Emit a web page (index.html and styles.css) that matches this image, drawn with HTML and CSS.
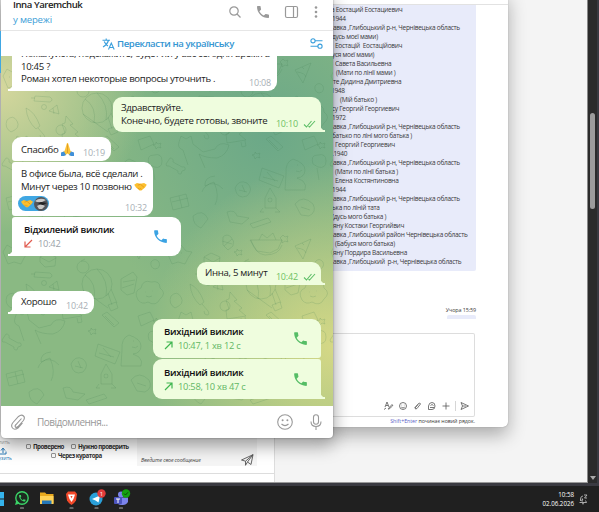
FILE: index.html
```
<!DOCTYPE html>
<html lang="uk">
<head>
<meta charset="utf-8">
<title>Inna Yaremchuk</title>
<link rel="stylesheet" href="styles.css">
</head>
<body>
<svg width="0" height="0" class="defs">
<defs>
<symbol id="phone" viewBox="0 0 24 24"><path d="M6.6 10.8c1.4 2.8 3.8 5.1 6.6 6.6l2.2-2.2c.3-.3.7-.4 1-.2 1.1.4 2.3.6 3.6.6.6 0 1 .4 1 1V20c0 .6-.4 1-1 1C10.600 21 3 13.400 3 4c0-.6.5-1 1-1h3.500c.6 0 1 .4 1 1 0 1.200.2 2.400.6 3.600.1.3 0 .7-.2 1z"/></symbol>
<symbol id="ticks" viewBox="0 0 13 8"><path d="M1 4.500 3.500 7 8.500 1M5.500 6.200 6.500 7 12 1" fill="none" stroke="#5fbf68" stroke-width="1.100"/></symbol>
<symbol id="out" viewBox="0 0 9 9"><path d="M1 8 8 1M2.500 1H8V6.500" fill="none" stroke="#3fb64f" stroke-width="1.200"/></symbol>
<symbol id="shake" viewBox="0 0 14 10"><path d="M0 3 3 1 7 2 11 1 14 3 12 6 8 9.500 6 9.500 2 6Z" fill="#fcbf2f"/><path d="M4 3.500 7 2.500 11 6M6 8.500 4 6.500M8 8.500 6 6.500" fill="none" stroke="#d98a12" stroke-width=".7"/></symbol>
<pattern id="doodles" width="164" height="176" patternUnits="userSpaceOnUse">
<g fill="none" stroke="#3f7d50" stroke-opacity=".2" stroke-width=".9" stroke-linejoin="round">
<circle cx="96" cy="52" r="15"/><path d="M84 43q12 8 9 24M96 37q12 12 9 27M82 58 107 76M107 61l4 12M110 57l6 14M107 73l8-3 2 6-7 3z"/>
<path d="M65 60l7 8-3 1 8 7-3 2 7 6-19 3-1-9 3-1-3-9 3-1zM76 86l1 5 4-1-1-5"/>
<path d="M25 52q9 4 14 18l-4 3q-9-8-10-21zM37 72l6 7q2 4-1 4-3 0-3-4"/>
<path d="M14 86l2-6 5 3 5-3 2 8 10 8 12-3q4-8 14-4-2 10-12 13-12 0-18-4l6 14M14 86q-2 6 4 8l5 15"/>
<path d="M137 68q-5-9 3-12 2-9 10-6 9-2 9 6 7 5 0 11-4 8-12 3-6 3-10-2zM144 60h.5M151 59h.5M145 64q3 2 6 0"/>
<path d="M120 47l12-7 4 5-3 16-7 2-6-5zM122 50l12-2M121 56l12-4"/>
<path d="M128 103q-8 3-7 15l-1 16h20q2-5-2-9l-6-3q8-1 8-8t-12-11zM132 109h1M131 115q4 2 6-1"/>
<path d="M97 112l22 8-5 12-20-8zM102 116l8 9M98 121l15 4"/>
<path d="M58 5q4-4 8 0t2 9l-5 4-5-5zM57 9l10 3M59 14l8-7"/>
<path d="M86 8q4 14 14 15 14 0 17-10M85 8h32l-4 9-8 4-13-2zM94 8l3-6 5 4 6-5 3 7"/>
<path d="M130 14l16-7-8 20zM132 16q8 1 9 5M137 11l2 2"/>
<path d="M39 25l7-4 9 4-1 9-10 1-5-5zM39 25l9 5 7-4"/>
<path d="M2 20l4-7 5 3 5-3 5 6 6 1-4 6-3 6-7-2-6 2zM8 21h1M16 21h1"/>
<circle cx="82" cy="35" r="6"/><path d="M80 29l4-2"/>
<path d="M34 40l15 1q4 3 0 5l-16-1zM30 42h4"/>
<path d="M48 55l8-6 2 9zM52 52l1 6"/><circle cx="60" cy="74" r="5"/><circle cx="43" cy="51" r="2.500"/>
<path d="M101 83l5-3 12 11-5 4zM104 84l9 9"/>
<path d="M3 105l2-3q4 0 3 4l9 5q4-1 3 3l-3 1-1 3q-4 0-3-3l-9-5q-3 1-3-2z"/>
<path d="M70 132q4-9 12-5 7 6 0 13-10 4-12-8zM74 134l8 2M77 129l3 7"/>
<path d="M5 142l16-4 3 12-16 4zM7 146l16-4M14 140l3 12"/>
<path d="M40 130q10-6 18 3M40 130q-1-9 10-10M49 126q6 14 1 23M49 126q-10 3-12 10"/>
<path d="M100 142l5-10 6 10v10h-11zM98 152l-3 4h4M111 152l4 4h-5"/><circle cx="105" cy="144" r="2"/>
<path d="M130 148q8-10 18 0 4 8-4 12l-8-1zM136 151l9 3"/>
<path d="M62 156q8-3 10 4l12 2-7 6-12-2zM28 160q10-8 15 3l-7 9q-8-3-8-12zM85 168l18-6 3 4-18 6z"/>
<path d="M118 3l2 2 3-1-1 3 1 3-3-1-3 2v-3l-2-2zM72 17l2 2 3-1-1 3 1 2-3-1-2 2-1-3-2-1 3-1zM155 86l2 2 3-1-1 3 1 2-3-1-2 2-1-3-2-1 3-1zM90 96l2 2 3-1-1 3 1 2-3-1-2 2-1-3-2-1 3-1z"/>
<path d="M150 30q4-5 8 0 2 6-4 7-5-1-4-7zM137 84l12-4 4 8-13 6zM6 64q6-6 10 1t-6 11q-7-4-4-12zM148 108q-3-9 5-9 8-2 8 6 0 8-8 6zM152 112l2 12"/>
</g>
</pattern>
</defs>
</svg>

<div class="desktop">
<div class="page">
<div class="side">
<div class="upload"><span>Удалить</span><svg width="9" height="8" viewBox="0 0 9 8"><path d="M5 6V2M3 3.500 5 1 7 3.500M1 4.500V7H8V4.500" fill="none" stroke="#2a7ab8"/></svg><b>Загрузить</b></div>
<div class="checks">
<div><i></i>Проверено <i class="second"></i>Нужно проверить</div>
<div class="row2"><i></i>Через куратора</div>
</div>
<div class="answer"><span>Введите свое сообщение</span>
<svg width="13" height="12" viewBox="0 0 13 12"><path d="M.5 6 12 .7 10 10.500 6.500 8 12 .7 4.500 7.200ZM4.500 7.200V11.300L6.500 8" fill="none" stroke="#555" stroke-width=".9"/></svg>
</div>
</div>
</div>
<div class="scroll"><div class="thumb"></div><div class="down"></div></div>
</div>

<div class="teams">
<div class="teams-top"></div>
<div class="quote">
<p class="a0">а Еостаций Еостациевич</p>
<p>1944</p>
<p class="a2">авка ,Глибоцький р-н, Чернівецька область</p>
<p>дусь моєї мами)</p>
<p class="a3">Еостацій&nbsp; Еостаційович</p>
<p>уся моєї мами)</p>
<p class="a3">Савета Васильевна</p>
<p class="a5">(Мати по лінії мами )</p>
<p class="a2">те Дидина Дмитриевна</p>
<p class="a0">1948</p>
<p class="a9">(Мій батько )</p>
<p>су Георгий Георгиевич</p>
<p>1972</p>
<p class="a2">авка ,Глибоцький р-н, Чернівецька область</p>
<p>батько по ліні мого батька )</p>
<p class="a3">Георгий Георгиевич</p>
<p>.1940</p>
<p class="a2">авка ,Глибоцький р-н, Чернівецька область</p>
<p class="a4">(Мати по лінії батька )</p>
<p class="a3">Елена Костянтиновна</p>
<p>1944</p>
<p class="a2">авка ,Глибоцький р-н, Чернівецька область</p>
<p>ька по ліній тата</p>
<p>(дусь мого батька )</p>
<p class="a2">яну Костаки Георгийвич</p>
<p class="a2">авка ,Глибоцький район Чернівецька область</p>
<p class="a4">(Бабуся мого батька)</p>
<p class="a2">яну Пордира Васильевна</p>
<p class="a2">авка ,Глибоцький&nbsp; р-н, Чернівецька область</p>
</div>
<div class="when">Учора 15:59</div>
<div class="stub"></div>
<div class="compose">
<svg width="100" height="12" viewBox="0 0 100 12" fill="none" stroke="#555" stroke-width=".8">
<path d="M2 7 4 2 6 7M3 5.500H5M5 9 9 4.500Q10 5 9.500 6L5.500 9.500M1 9.500 3 8"/>
<circle cx="20" cy="6" r="3.500"/><path d="M18.300 7.200Q20 8.800 21.700 7.200M18.700 4.800V5.300M21.300 4.800V5.300"/>
<path d="M32 8 35.500 3.500Q37 2.300 37.500 4L34 8.500Q32 10 32 7.500L35 4.500"/>
<path d="M45.500 9.500V6Q46 2.500 49 2.500T52 6 49 9.500ZM47 7.500H51M47.500 5.500Q49 3.500 50.500 5.500"/>
<path d="M59.500 6H66.500M63 2.500V9.500"/><path d="M72.500 1V11" stroke="#ccc"/>
<path d="M78 2.500 85.500 6 78 9.500 79.500 6ZM79.500 6H83"/>
</svg>
</div>
<div class="hint"><span>Shift+Enter</span> починає новий рядок.</div>
</div>

<div class="tg">
<div class="head">
<div class="who"><b>Inna Yaremchuk</b><span>у мережі</span></div>
<svg class="tools" width="96" height="16" viewBox="0 0 96 16">
<g fill="none" stroke="#999" stroke-width="1.200"><circle cx="9" cy="7" r="4.200"/><path d="M12 10 15.500 13.500"/><rect x="60.500" y="2.500" width="12" height="11" rx="1.500"/><path d="M68.500 2.500V13.500"/></g>
<use href="#phone" x="30" y="0" width="16" height="16" fill="#999"/>
<g fill="#999"><circle cx="91" cy="3.500" r="1.300"/><circle cx="91" cy="8" r="1.300"/><circle cx="91" cy="12.500" r="1.300"/></g>
</svg>
</div>
<div class="translate">
<svg width="13" height="12" viewBox="0 0 13 12" fill="none" stroke="#3a9fdc" stroke-width="1.100"><path d="M.5 2.200H8M4.200.5V2.200M6.500 2.500Q5 7 1 9M2.200 3.500Q3.500 6.500 6 8M6.500 11.500 9.300 5 12.200 11.500M7.500 9.500H11.200"/></svg>
<b>Перекласти на українську</b>
<svg class="tune" width="13" height="11" viewBox="0 0 13 11" fill="none" stroke="#3a9fdc" stroke-width="1.100"><circle cx="3" cy="2.800" r="2.100"/><path d="M5 2.800H12.500M.5 8.200H8"/><circle cx="10" cy="8.200" r="2.100"/></svg>
</div>
<div class="chat">
<svg class="wall" width="332" height="351"><rect width="332" height="351" fill="url(#doodles)"/></svg>
<div class="msg in tail m1">Пожалуйста, подскажите, будет ли у вас сегодня время в<br>10:45 ?<br>Роман хотел некоторые вопросы уточнить .<time>10:08</time></div>
<div class="msg out tail m2">Здравствуйте.<br>Конечно, будете готовы, звоните<time>10:10 <svg width="13" height="8"><use href="#ticks"/></svg></time></div>
<div class="msg in m3">Спасибо <svg class="pray" width="13" height="13" viewBox="0 0 13 13"><path d="M6 0 7 0 9.500 8 12.500 10 9 12.500 6.500 10.500 4 12.500.5 10 3.500 8Z" fill="#fcc43a"/><path d="M6.500 1V10" stroke="#d9901a" stroke-width=".7"/><path d="M0 9.500 3 8.500 5 12 3 13H0ZM13 9.500 10 8.500 8 12 10 13H13Z" fill="#4090d9"/></svg><time>10:19</time></div>
<div class="msg in m4">В офисе была, всё сделали .<br>Минут через 10 позвоню <svg width="13" height="9"><use href="#shake"/></svg>
<div class="react"><svg width="12" height="9"><use href="#shake"/></svg><svg width="14" height="14" viewBox="0 0 14 14"><circle cx="7" cy="7" r="7" fill="#55565a"/><path d="M1 4Q6 0 12 3L8 5 3 5ZM3 9 7 7 11 9 8 12 5 12Z" fill="#c9c8c6"/><path d="M7 5 13 6 9 8 4 7Z" fill="#222"/></svg></div>
<time>10:32</time></div>
<div class="msg in tail call m5"><div><b>Відхилений виклик</b><span><svg width="9" height="9" viewBox="0 0 9 9"><path d="M8 1 1.500 7.500M1 2.500V8H6.500" fill="none" stroke="#e05a4e" stroke-width="1.200"/></svg>10:42</span></div><svg width="17" height="17" fill="#3ba3e3"><use href="#phone"/></svg></div>
<div class="msg out tail m6">Инна, 5 минут<time>10:42 <svg width="13" height="8"><use href="#ticks"/></svg></time></div>
<div class="msg in tail m7">Хорошо<time>10:42</time></div>
<div class="msg out call m8"><div><b>Вихідний виклик</b><span><svg width="9" height="9"><use href="#out"/></svg>10:47, 1 хв 12 с</span></div><svg width="17" height="17" fill="#56bd66"><use href="#phone"/></svg></div>
<div class="msg out tail call m9"><div><b>Вихідний виклик</b><span><svg width="9" height="9"><use href="#out"/></svg>10:58, 10 хв 47 с</span></div><svg width="17" height="17" fill="#56bd66"><use href="#phone"/></svg></div>
</div>
<div class="input">
<svg width="16" height="18" viewBox="0 0 16 18"><path d="M11.500 5.500 6 11.500Q4.500 13 5.500 14T8 13.500L13 8Q15.500 5 13.500 3T8.500 3.500L3 9.500Q.5 12.500 2.500 15T8 15L12.500 10" fill="none" stroke="#999" stroke-width="1.100"/></svg>
<span>Повідомлення...</span>
<svg class="smile" width="16" height="16" viewBox="0 0 16 16" fill="none" stroke="#999" stroke-width="1.100"><circle cx="8" cy="8" r="7.300"/><path d="M4.500 10Q8 13.300 11.500 10"/><g fill="#999" stroke="none"><circle cx="5.600" cy="6.200" r="1"/><circle cx="10.400" cy="6.200" r="1"/></g></svg>
<svg width="12" height="16" viewBox="0 0 12 16" fill="none" stroke="#999" stroke-width="1.100"><rect x="3.500" y=".7" width="5" height="9.500" rx="2.500"/><path d="M1 7.500Q1 12.500 6 12.500T11 7.500M6 12.500V16"/></svg>
</div>
</div>
<div class="edge"></div>

<div class="taskbar">
<svg class="win" width="5" height="16" viewBox="0 0 5 16" fill="#35b4ec"><path d="M0 1H4V7.500H0ZM0 8.500H4V15H0Z"/></svg>
<svg class="apps" width="120" height="22" viewBox="0 0 120 22">
<circle cx="9" cy="10" r="6.200" fill="#1d2a20" stroke="#3bd367" stroke-width="1.400"/><path d="M2 17 3.500 12 7 15.500Z" fill="#3bd367"/><use href="#phone" x="5" y="6" width="8.500" height="8.500" fill="#3bd367"/>
<path d="M27 4.500H32L33.500 6H40.500V15.500H27Z" fill="#e8a91e"/><path d="M27 8H40.500V16H27Z" fill="#ffd257"/><path d="M29 12.500H38.500V16H29Z" fill="#2577b8"/>
<path d="M55 3.500H62L64 6 63 12.500Q62 14.500 58.500 17 55 14.500 54 12.500L53 6Z" fill="#f2492a"/><path d="M55 6.500H62L60.500 11 58.500 14 56.500 11Z" fill="#fff"/><path d="M57.500 8H59.500L58.500 10.500Z" fill="#f2492a"/>
<circle cx="83" cy="11" r="6.500" fill="#2a9fd8"/><path d="M79 11 87 7.500 85.500 14.500 82.500 12.500Z" fill="#fff"/>
<circle cx="88.500" cy="5.500" r="4.200" fill="#e23b3b"/><text x="88.500" y="7.800" class="badge">1</text>
<circle cx="108" cy="6.500" r="3" fill="#7b83eb"/><path d="M103 9.500H115V14Q113 17.500 109 17 104 17 103 13Z" fill="#7b83eb"/><rect x="101" y="9" width="8" height="7" rx="1" fill="#4b53bc"/><path d="M103 11H107M105 11V15" stroke="#fff"/>
<circle cx="113" cy="5.500" r="4.200" fill="#13a10e"/><path d="M111 5.500 112.500 7 115 4.300" fill="none" stroke="#0b3d08" stroke-width=".9"/>
<path d="M7.500 20H10.500M57 20H60M82 20H85M106.500 20H109.500" stroke="#aaa" stroke-width="1.200" stroke-linecap="round"/>
</svg>
<div class="clock">10:58<br>02.06.2026</div>
<svg class="bell" width="10" height="11" viewBox="0 0 10 11" fill="none" stroke="#ccc" stroke-width=".8"><path d="M1.500 8.500H8.500L7.500 6.500M2.500 7V4.500Q3 2 5 2M4 9.500Q5 10.500 6 9.500M6 1H9L6.500 4H9M3.500 5H5L3.500 7H5"/></svg>
</div>
</body>
</html>
```

FILE: styles.css
```
body
{ margin: 0;
width: 599px;
height: 512px;
overflow: hidden;
position: relative;
background: #202020;
font-family: "Open Sans", "Noto Sans", sans-serif;
}

p { margin: 0; }
svg { display: block; flex: none; }
.defs { position: absolute; }

/* Desktop page behind the windows */

.desktop
{ display: flex;
height: 483px;
background: #3a3a41;
}

.page
{ width: 588px;
box-sizing: border-box;
background: #f4f4f4;
border-right: 1px solid #888;
border-bottom: 1px solid #999;
display: flex;
align-items: flex-end;
}

.side
{ width: 274px;
height: 50px;
background: #fff;
border-right: 1px solid #ddd;
display: flex;
box-shadow: inset 0 -8px #fff, inset 0 -9px #ddd;
}

.upload
{ width: 12px;
margin-top: 7px;
font-size: 5px;
line-height: 6px;
color: #aaa;
display: flex;
flex-direction: column;
align-items: flex-end;
overflow: hidden;
}
.upload span { margin-right: 2px; }
.upload svg { margin: 2px 5px 0 0; }
.upload b { color: #2a7ab8; font-weight: normal; }

.checks
{ width: 125px;
padding-top: 10px;
font: bold 6.200px/9px "Open Sans", sans-serif;
letter-spacing: -.5px;
color: #333;
white-space: nowrap;
}
.checks div { padding-left: 14px; }
.checks .row2 { padding-left: 39px; }
.checks i
{ display: inline-block;
width: 3px;
height: 3px;
margin-right: 2px;
border: 1px solid #999;
border-radius: 1px;
}
.checks .second { margin-left: 6px; }

.answer
{ width: 120px;
height: 34px;
box-sizing: border-box;
padding: 22px 3px 0 4px;
background: #f5f5f5;
display: flex;
justify-content: space-between;
font: italic 5.300px/12px "Open Sans", sans-serif;
letter-spacing: -.15px;
color: #444;
}

.scroll
{ width: 9px;
background: #2b2b2b;
display: flex;
flex-direction: column;
align-items: center;
justify-content: space-between;
}
.thumb
{ width: 5px;
height: 96px;
margin-top: 113px;
border-radius: 3px;
background: #9c9c9c;
}
.down
{ border: 3px solid transparent;
border-top: 4px solid #aaa;
border-bottom: 0;
margin-bottom: 3px;
}

/* Work chat window */

.teams
{ position: absolute;
left: 325px;
top: -8px;
width: 183px;
height: 435px;
background: #fff;
border-radius: 0 0 5px 5px;
box-shadow: 0 0 1px #777, 0 8px 18px rgba(0,0,0,.3);
font-size: 6.500px;
color: #3a3a3a;
}

.teams-top { height: 12px; border-bottom: 1px solid #e2e2e2; }

.quote
{ width: 151px;
height: 266px;
box-sizing: border-box;
background: #e8ebfa;
border-radius: 0 0 2px 2px;
line-height: 9.020px;
letter-spacing: -.28px;
white-space: nowrap;
}
.quote p { padding-left: 7px; }
.quote .a0 { padding-left: 6px; }
.quote .a2 { padding-left: 8px; }
.quote .a3 { padding-left: 10px; }
.quote .a4 { padding-left: 10px; }
.quote .a5 { padding-left: 11px; }
.quote .a9 { padding-left: 15px; }

.when
{ margin: 34px 32px 0 0;
text-align: right;
font-size: 5.400px;
line-height: 10px;
letter-spacing: -.1px;
}
.stub
{ width: 29px;
height: 4px;
margin-left: 122px;
background: #e8ebfa;
border-radius: 2px 2px 0 0;
}

.compose
{ width: 149px;
height: 82px;
margin-top: 14px;
border: 1px solid #ddd;
border-left: 0;
border-radius: 2px;
display: flex;
justify-content: flex-end;
align-items: flex-end;
box-sizing: content-box;
}
.compose svg { margin: 0 -9px 4px 0; }

.hint
{ margin: -1px 33px 0 0;
text-align: right;
font-size: 5.300px;
line-height: 10px;
letter-spacing: -.05px;
white-space: nowrap;
}
.hint span { color: #5b5fc7; }

/* Messenger window */

.edge
{ position: absolute;
left: 0;
top: 31px;
width: 1px;
height: 42px;
background: #40a7e3;
}

.tg
{ position: absolute;
left: 1px;
top: -5px;
width: 332px;
height: 443px;
background: #fff;
border-radius: 0 0 4px 4px;
overflow: hidden;
display: flex;
flex-direction: column;
box-shadow: 0 0 2px rgba(0,0,0,.4), 0 7px 18px rgba(0,0,0,.4);
font-size: 9.600px;
letter-spacing: -.3px;
}

.head
{ height: 35px;
border-bottom: 1px solid #e6e6e6;
display: flex;
justify-content: space-between;
}
.who
{ padding: 3px 0 0 12px;
line-height: 15px;
color: #222;
}
.who b { font-weight: 600; display: block; line-height: 14px; letter-spacing: -.45px; }
.who span { color: #40a0d8; letter-spacing: -.2px; }
.tools { margin: 9px 12px 0 0; }

.translate
{ height: 25px;
display: flex;
align-items: center;
padding-left: 101px;
color: #3596d2;
}
.translate b { margin-left: 2px; font-weight: 600; letter-spacing: -.38px; }
.translate .tune { margin: 0 10px 0 auto; }

.chat
{ height: 350px;
flex: none;
position: relative;
display: flex;
flex-direction: column;
justify-content: flex-end;
align-items: flex-start;
padding: 0 12px 7px 11px;
box-sizing: border-box;
overflow: hidden;
background:
radial-gradient(circle at 100% 83%, #d5d886 0, rgba(213,216,134,0) 185px),
radial-gradient(circle at 0 9%, #d5d79d 0, rgba(213,215,157,0) 145px),
radial-gradient(circle at 80% 22%, #6ba888 0, rgba(107,168,136,0) 190px),
#8ab983;
}

.wall { position: absolute; left: 0; top: 0; }

.msg
{ position: relative;
box-sizing: border-box;
flex: none;
padding: 5px 9px;
border-radius: 9px;
background: #fff;
line-height: 12.500px;
color: #222;
white-space: nowrap;
}
.msg.out { align-self: flex-end; background: #effdde; }
.msg svg { display: inline-block; vertical-align: -1px; }
.in.tail { border-bottom-left-radius: 0; }
.out.tail { border-bottom-right-radius: 0; }
.in.tail::before, .out.tail::before
{ content: "";
position: absolute;
bottom: 0;
left: -4px;
width: 4px;
height: 6px;
background: radial-gradient(circle at 0 0, transparent 4px, #fff 4.500px);
}
.out.tail::before
{ left: auto;
right: -4px;
background: radial-gradient(circle at 100% 0, transparent 4px, #effdde 4.500px);
}

.msg time
{ position: absolute;
right: 6px;
bottom: 2px;
font-size: 9px;
letter-spacing: -.2px;
color: #a8afb5;
}
.out time { right: 5px; color: #6cc264; }
.out time svg { margin-left: 3px; }

.m1 { width: 265px; height: 48px; margin-bottom: 6px; }
.m2 { width: 208px; height: 35px; margin-bottom: 5px; padding-left: 8px; }
.m3 { width: 99px; height: 24px; margin-bottom: 1px; padding-top: 6px; border-bottom-left-radius: 3px; }
.m4 { width: 141px; height: 54px; margin-bottom: 1px; border-radius: 3px 9px 9px 3px; padding-top: 6px; }
.m5 { width: 169px; height: 39px; margin-bottom: 6px; border-top-left-radius: 3px; }
.m6 { width: 124px; height: 23px; margin-bottom: 6px; padding-left: 8px; }
.m7 { width: 82px; height: 23px; margin-bottom: 5px; }
.m8 { width: 168px; height: 39px; margin-bottom: 1px; border-bottom-right-radius: 3px; }
.m9 { width: 168px; height: 40px; border-top-right-radius: 3px; }
.msg .pray { vertical-align: -3px; }

.react
{ display: flex;
align-items: center;
justify-content: space-between;
width: 31px;
height: 15px;
margin: 3px 0 0 -3px;
padding: 0 1px 0 3px;
box-sizing: border-box;
border-radius: 8px;
background: #40a7e3;
}

.call
{ display: flex;
align-items: center;
justify-content: space-between;
padding: 0 12px 0 11px;
}
.m5 { padding-left: 12px; }
.call b { display: block; font-weight: 600; color: #111; line-height: 14px; }
.call span { display: block; font-size: 9.300px; line-height: 13px; letter-spacing: -.25px; color: #9aa2a9; }
.call span svg { margin-right: 5px; }
.call.out span { color: #62b765; }

.input
{ height: 32px;
display: flex;
align-items: center;
padding: 0 11px 0 9px;
font-size: 10px;
letter-spacing: -.5px;
color: #999;
}
.input span { margin-left: 11px; }
.input .smile { margin: 0 17px 0 auto; }

/* Taskbar */

.taskbar
{ height: 26px;
margin-top: 3px;
display: flex;
align-items: center;
background: #202020;
}
body::before
{ content: "";
position: absolute;
top: 483px;
width: 599px;
height: 3px;
background: #3a3a41;
}
.win { margin-right: 8px; }
.apps { margin-top: 0; }
.badge { font-size: 6px; fill: #fff; text-anchor: middle; }
.clock
{ margin-left: auto;
text-align: right;
font-size: 6.200px;
line-height: 9px;
color: #fff;
}
.bell { margin: 0 11px 0 4px; }
```
